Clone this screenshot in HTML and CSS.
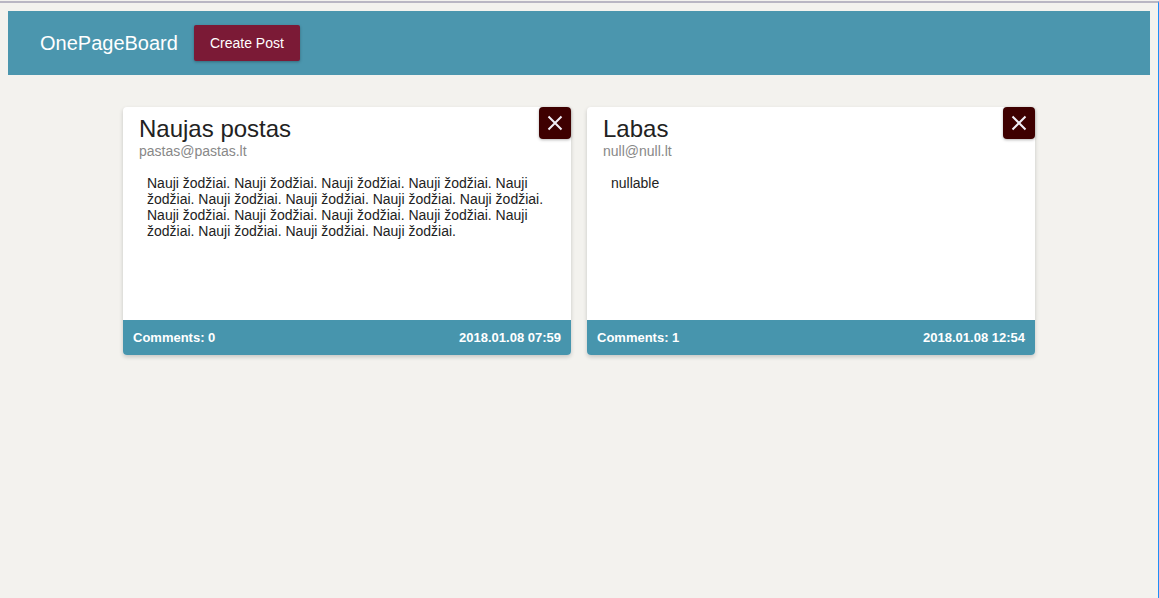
FILE: index.html
```html
<!DOCTYPE html>
<html lang="lt">
<head>
<meta charset="utf-8">
<title>OnePageBoard</title>
<link rel="stylesheet" href="styles.css">
</head>
<body>
<div class="frame">
  <header class="topbar">
    <span class="brand">OnePageBoard</span>
    <button class="create-btn" type="button">Create Post</button>
  </header>
  <main class="board">
    <article class="card">
      <button class="close-btn" type="button" aria-label="Delete">
        <svg width="16" height="16" viewBox="0 0 16 16"><path d="M1.5 1.5 L14.5 14.5 M14.5 1.5 L1.5 14.5" stroke="#f1eef6" stroke-width="2" fill="none"/></svg>
      </button>
      <div class="card-main">
        <h2 class="card-title">Naujas postas</h2>
        <div class="card-email">pastas@pastas.lt</div>
        <p class="card-text">Nauji žodžiai. Nauji žodžiai. Nauji žodžiai. Nauji žodžiai. Nauji žodžiai. Nauji žodžiai. Nauji žodžiai. Nauji žodžiai. Nauji žodžiai. Nauji žodžiai. Nauji žodžiai. Nauji žodžiai. Nauji žodžiai. Nauji žodžiai. Nauji žodžiai. Nauji žodžiai. Nauji žodžiai.</p>
      </div>
      <footer class="card-foot">
        <span>Comments: 0</span>
        <span>2018.01.08 07:59</span>
      </footer>
    </article>
    <article class="card">
      <button class="close-btn" type="button" aria-label="Delete">
        <svg width="16" height="16" viewBox="0 0 16 16"><path d="M1.5 1.5 L14.5 14.5 M14.5 1.5 L1.5 14.5" stroke="#f1eef6" stroke-width="2" fill="none"/></svg>
      </button>
      <div class="card-main">
        <h2 class="card-title">Labas</h2>
        <div class="card-email">null@null.lt</div>
        <p class="card-text">nullable</p>
      </div>
      <footer class="card-foot">
        <span>Comments: 1</span>
        <span>2018.01.08 12:54</span>
      </footer>
    </article>
  </main>
</div>
</body>
</html>
```

FILE: styles.css
```css
html {
  background: #f3f2ee;
}
body {
  margin: 0;
  font-family: "Liberation Sans", Arial, sans-serif;
  color: #222;
}
.frame {
  width: 1158px;
  height: 595px;
  margin-top: 1px;
  border-top: 2px solid #b9b6c3;
  border-right: 1px solid #1f8ef7;
  background: #f3f2ee;
  overflow: hidden;
}
.topbar {
  margin: 8px 8px 0 8px;
  height: 64px;
  background: #4b96ae;
  display: flex;
  align-items: center;
  padding-left: 32px;
  gap: 16px;
}
.brand {
  color: #fff;
  font-size: 20px;
}
.create-btn {
  height: 36px;
  padding: 0 16px;
  border: none;
  border-radius: 2px;
  background: #7b1a36;
  color: #fff;
  font-family: "Liberation Sans", Arial, sans-serif;
  font-size: 14px;
  box-shadow: 0 1px 3px rgba(0, 0, 0, 0.3);
}
.board {
  display: flex;
  justify-content: center;
  gap: 16px;
  margin-top: 32px;
}
.card {
  position: relative;
  width: 448px;
  height: 248px;
  background: #fff;
  border-radius: 4px;
  box-shadow: 0 2px 4px rgba(0, 0, 0, 0.18);
  display: flex;
  flex-direction: column;
}
.card-main {
  flex: 1;
  padding: 8px 16px 0 16px;
}
.card-title {
  margin: 0;
  font-size: 24px;
  line-height: 28px;
  font-weight: normal;
  color: #222;
}
.card-email {
  font-size: 14px;
  line-height: 16px;
  color: #888;
}
.card-text {
  margin: 16px 0 0 0;
  padding-left: 8px;
  width: 400px;
  font-size: 14px;
  line-height: 16px;
  color: #222;
}
.card-foot {
  height: 35px;
  background: #4795ad;
  border-radius: 0 0 4px 4px;
  display: flex;
  align-items: center;
  justify-content: space-between;
  padding: 0 10px;
  color: #fff;
  font-size: 13px;
  font-weight: bold;
}
.close-btn {
  position: absolute;
  top: 0;
  right: 0;
  width: 32px;
  height: 32px;
  padding: 0;
  border: none;
  border-radius: 4px;
  background: #3e0000;
  box-shadow: 0 1px 3px rgba(0, 0, 0, 0.3);
  display: flex;
  align-items: center;
  justify-content: center;
}
```
